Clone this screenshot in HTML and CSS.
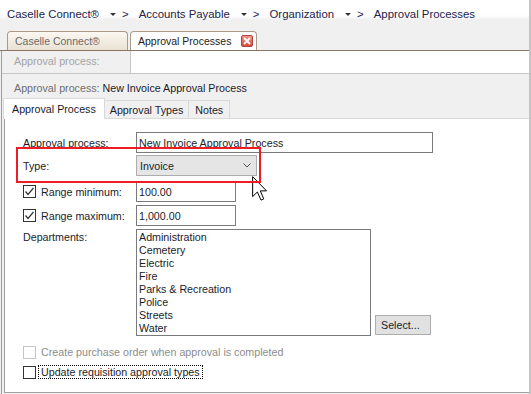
FILE: index.html
```html
<!DOCTYPE html>
<html lang="en">
<head>
  <meta charset="UTF-8">
  <title>Approval Processes</title>
  <link rel="stylesheet" href="styles.css">
</head>
<body>
  <div class="app">
    <div class="crumbs">
      <span class="crumb">Caselle Connect®</span><span class="caret"></span><span class="sep">&gt;</span>
      <span class="crumb">Accounts Payable</span><span class="caret"></span><span class="sep">&gt;</span>
      <span class="crumb">Organization</span><span class="caret"></span><span class="sep">&gt;</span>
      <span class="crumb">Approval Processes</span>
    </div>

    <div class="tabs">
      <div class="tab tab-home">Caselle Connect®</div>
      <div class="tab tab-active">
        <span>Approval Processes</span>
        <span class="close">
          <svg width="10" height="10" viewBox="0 0 10 10"><path d="M2 2 L8 8 M8 2 L2 8" stroke="#fff" stroke-width="1.8"/></svg>
        </span>
      </div>
    </div>

    <div class="panel">
      <div class="search">
        <div class="search-label">Approval process:</div>
        <div class="search-box"></div>
      </div>

      <div class="title"><span class="title-label">Approval process:</span> New Invoice Approval Process</div>

      <div class="subtabs">
        <div class="subtab on">Approval Process</div>
        <div class="subtab">Approval Types</div>
        <div class="subtab notes">Notes</div>
      </div>

      <div class="sheet">
        <div class="row">
          <div class="lbl">Approval process:</div>
          <div class="field wide">New Invoice Approval Process</div>
        </div>
        <div class="row r-type">
          <div class="lbl">Type:</div>
          <div class="field select">
            <span>Invoice</span>
            <svg width="8" height="5" viewBox="0 0 8 5"><polyline points="0.5,0.5 4,4 7.5,0.5" fill="none" stroke="#555" stroke-width="1"/></svg>
          </div>
        </div>
        <div class="row r-min">
          <div class="lbl">
            <span class="check">
              <svg width="11" height="11" viewBox="0 0 11 11"><polyline points="1.5,5.5 4,8.5 9.5,2" fill="none" stroke="#333" stroke-width="1.2"/></svg>
            </span>Range minimum:
          </div>
          <div class="field short">100.00</div>
        </div>
        <div class="row r-max">
          <div class="lbl">
            <span class="check">
              <svg width="11" height="11" viewBox="0 0 11 11"><polyline points="1.5,5.5 4,8.5 9.5,2" fill="none" stroke="#333" stroke-width="1.2"/></svg>
            </span>Range maximum:
          </div>
          <div class="field short">1,000.00</div>
        </div>
        <div class="row r-dept">
          <div class="lbl lbl-top">Departments:</div>
          <div class="list">
            <div>Administration</div>
            <div>Cemetery</div>
            <div>Electric</div>
            <div>Fire</div>
            <div>Parks &amp; Recreation</div>
            <div>Police</div>
            <div>Streets</div>
            <div>Water</div>
          </div>
          <div class="btn">Select...</div>
        </div>

        <div class="opt opt-po">
          <span class="check off"></span><span class="opt-text">Create purchase order when approval is completed</span>
        </div>
        <div class="opt opt-req">
          <span class="check"></span><span class="opt-text focus">Update requisition approval types</span>
        </div>
      </div>
    </div>
  </div>

  <svg class="pointer" width="16" height="25" viewBox="0 0 12.8 20">
    <path d="M0.5 0.5 L0.5 16.5 L4.3 12.8 L7.2 19.3 L9.4 18.3 L6.6 11.9 L11.6 11.9 Z" fill="#fff" stroke="#000" stroke-width="0.8" stroke-linejoin="miter"/>
  </svg>
  <div class="callout"></div>
</body>
</html>
```

FILE: styles.css
```css
body {
  margin: 0;
  width: 531px;
  height: 394px;
  overflow: hidden;
  position: relative;
  background-color: #f0f0f0;
  font-family: 'Liberation Sans', Arial, sans-serif;
  font-size: 10.7px;
  color: #1b1b2b;
}
.app {
  height: 394px;
  box-sizing: border-box;
  border-right: 2px solid #c4c4c4;
  display: flex;
  flex-direction: column;
}

/* breadcrumb */
.crumbs {
  height: 31px;
  box-sizing: border-box;
  padding: 8px 0 0 7px;
  display: flex;
  align-items: flex-start;
  font-size: 11.4px;
  line-height: 13px;
  color: #22224a;
  background: linear-gradient(#fff 0, #fff 15px, #f0f0f0 20px);
}
.caret {
  width: 0;
  height: 0;
  margin: 5px 6px 0 11px;
  border-left: 3px solid transparent;
  border-right: 3px solid transparent;
  border-top: 3px solid #333;
}
.sep {
  margin-right: 10px;
}

/* document tabs */
.tabs {
  height: 19px;
  display: flex;
  align-items: flex-end;
  gap: 2px;
  padding-left: 7px;
  border-bottom: 1px solid #8d7565;
}
.tab {
  height: 19px;
  box-sizing: border-box;
  border: 1px solid #a99a89;
  border-bottom: 0;
  border-radius: 4px 4px 0 0;
  display: flex;
  align-items: center;
  font-size: 10.5px;
  padding-left: 7px;
}
.tab-home {
  width: 121px;
  color: #6a6a6a;
  background: linear-gradient(#fbf8f2, #e9e1d3);
}
.tab-active {
  width: 127px;
  background-color: #fff;
  color: #222;
}
.close {
  width: 12px;
  height: 12px;
  box-sizing: border-box;
  margin-left: 10px;
  border: 1px solid #b4433a;
  border-radius: 2px;
  background: linear-gradient(#f3958b, #d8483d);
  display: flex;
  align-items: center;
  justify-content: center;
}

/* form panel */
.panel {
  flex: 1;
  display: flex;
  flex-direction: column;
  margin-left: 1px;
  border-left: 1px solid #9c9c9c;
}
.search {
  height: 22px;
  display: flex;
  border-bottom: 1px solid #c6c6c6;
}
.search-label {
  width: 116px;
  padding: 4px 0 0 12px;
  color: #a3a3a3;
}
.search-box {
  flex: 1;
  background-color: #fff;
  border-left: 1px solid #c6c6c6;
}
.title {
  height: 24px;
  box-sizing: border-box;
  padding: 8px 0 0 12px;
  line-height: 13px;
}
.title-label {
  color: #6e6e6e;
}
.subtabs {
  height: 20px;
  display: flex;
  align-items: flex-end;
  padding-left: 1px;
}
.subtab {
  height: 18px;
  box-sizing: border-box;
  padding: 0 5px;
  display: flex;
  align-items: center;
  background-color: #f0f0f0;
  border: 1px solid #d9d9d9;
  border-bottom: 0;
  margin-left: -1px;
}
.subtab.on {
  height: 21px;
  margin-bottom: -1px;
  padding: 0 8px;
  background-color: #fff;
  margin-left: 0;
  position: relative;
}
.subtab.notes {
  padding: 0 6px;
}
.sheet {
  flex: 1;
  margin: 0 0 1px 2px;
  padding: 13px 0 0 18px;
  background-color: #fff;
  border-top: 1px solid #d9d9d9;
  border-left: 1px solid #a0a0a0;
  border-bottom: 1px solid #a0a0a0;
}
.row {
  display: flex;
  align-items: center;
}
.lbl {
  width: 113px;
  flex: none;
  display: flex;
  align-items: center;
}
.lbl-top {
  align-self: flex-start;
  padding-top: 2px;
}
.field {
  height: 21px;
  box-sizing: border-box;
  padding: 0 2px;
  display: flex;
  align-items: center;
  border: 1px solid #7a7a7a;
  background-color: #fff;
}
.wide {
  width: 297px;
}
.short {
  width: 100px;
}
.select {
  width: 121px;
  padding: 0 5px 0 3px;
  justify-content: space-between;
  background-color: #e5e5e5;
  border-color: #adadad;
}
.r-type {
  margin-top: 2px;
}
.r-min {
  margin-top: 5px;
}
.r-max, .r-dept {
  margin-top: 3px;
}
.list {
  width: 235px;
  height: 107px;
  box-sizing: border-box;
  padding: 1px 2px;
  border: 1px solid #7a7a7a;
  line-height: 13px;
}
.btn {
  align-self: flex-end;
  width: 56px;
  height: 20px;
  box-sizing: border-box;
  margin: 0 0 1px 4px;
  padding-left: 5px;
  display: flex;
  align-items: center;
  background-color: #e1e1e1;
  border: 1px solid #adadad;
}
.check {
  width: 13px;
  height: 13px;
  box-sizing: border-box;
  margin-right: 5px;
  border: 1px solid #333;
  background-color: #fff;
  display: inline-flex;
  align-items: center;
  justify-content: center;
  flex: none;
}
.check.off {
  border-color: #c4c4c4;
}
.opt {
  height: 16px;
  display: flex;
  align-items: center;
}
.opt .check {
  margin-right: 3px;
}
.opt-po {
  margin-top: 8px;
  color: #8d8d8d;
}
.opt-req {
  margin-top: 4px;
}
.opt-text {
  padding: 0 2px;
  line-height: 12px;
}
.focus {
  outline: 1px dotted #000;
}

/* overlays */
.pointer {
  position: absolute;
  left: 252px;
  top: 176px;
}
.callout {
  position: absolute;
  left: 16px;
  top: 147px;
  width: 245px;
  height: 36px;
  box-sizing: border-box;
  border: 2px solid #ee1c24;
}
```
